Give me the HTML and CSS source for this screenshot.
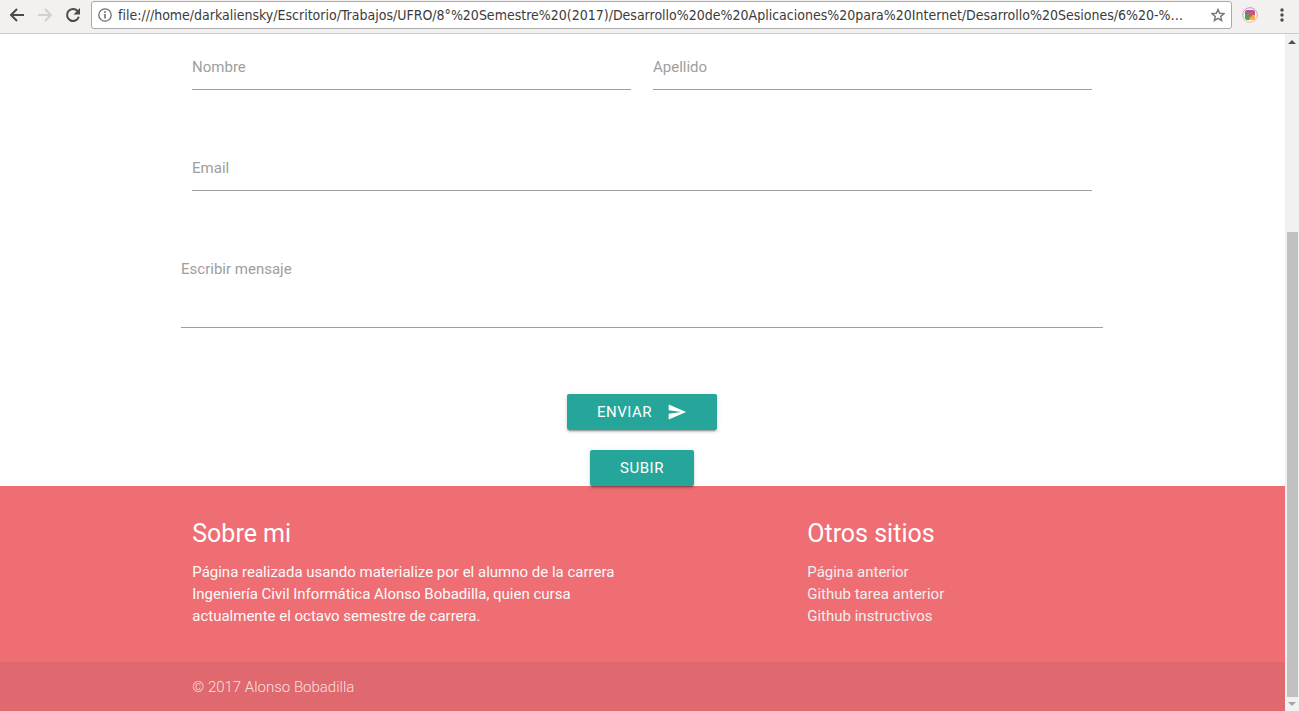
FILE: index.html
```html
<!DOCTYPE html>
<html lang="es">
<head>
<meta charset="utf-8">
<meta name="viewport" content="width=device-width, initial-scale=1">
<title>Contacto</title>
<link rel="stylesheet" href="styles.css">
</head>
<body>
<div class="browser">
  <header class="toolbar">
    <button class="tool" type="button" aria-label="Atrás"><svg viewBox="0 0 16 16" width="16" height="16"><path d="M15 8H2.5M8 2 2 8l6 6" fill="none" stroke="#4b4b4b" stroke-width="2"/></svg></button>
    <button class="tool" type="button" aria-label="Adelante" disabled><svg viewBox="0 0 16 16" width="16" height="16"><path d="M1 8h12.500M8 2l6 6-6 6" fill="none" stroke="#d0d0ce" stroke-width="2"/></svg></button>
    <button class="tool" type="button" aria-label="Recargar"><svg viewBox="0 0 16 16" width="16" height="16"><path d="M12.600 4A6 6 0 1 0 13.800 9.800" fill="none" stroke="#4b4b4b" stroke-width="2"/><path d="M15 1v6.500H8.500z" fill="#4b4b4b"/></svg></button>
    <div class="address">
      <svg viewBox="0 0 14 14" width="14" height="14" aria-hidden="true"><circle cx="7" cy="7" r="6.200" fill="none" stroke="#6e6e6e" stroke-width="1.300"/><path d="M6.200 3.300h1.600v1.600H6.200zM6.200 6h1.600v4.600H6.200z" fill="#6e6e6e"/></svg>
      <input class="url" type="text" aria-label="Dirección" value="file:///home/darkaliensky/Escritorio/Trabajos/UFRO/8°%20Semestre%20(2017)/Desarrollo%20de%20Aplicaciones%20para%20Internet/Desarrollo%20Sesiones/6%20-%…">
      <button class="star" type="button" aria-label="Marcador"><svg viewBox="0 0 14 14" width="14" height="14"><path d="M7 1.400l1.650 3.900 4.250.35-3.220 2.780.97 4.150L7 10.400l-3.650 2.180.97-4.150L1.100 5.650l4.250-.35z" fill="none" stroke="#777" stroke-width="1.400"/></svg></button>
    </div>
    <button class="tool" type="button" aria-label="Extensión"><svg viewBox="0 0 16 16" width="16" height="16"><defs><linearGradient id="ring" x1="0" y1="0" x2="0" y2="1"><stop offset="0" stop-color="#c58ac8"/><stop offset="1" stop-color="#f7b98c"/></linearGradient></defs><circle cx="8" cy="8" r="7.300" fill="#f6f3f2" stroke="url(#ring)"/><rect x="3" y="3" width="10" height="10" rx="3" fill="#e2554f"/><path d="M3 7V6a3 3 0 0 1 3-3h4a3 3 0 0 1 3 3z" fill="#b04fb5"/><path d="M5 5.500h7.500L11 8H8z" fill="#e5484d"/><path d="M3.300 5 8 9l-1 4H6a3 3 0 0 1-3-3z" fill="#43a852"/><path d="M9 8h4v2a3 3 0 0 1-3 3H7z" fill="#f5b03a"/><circle cx="8" cy="8" r="2" fill="#5a8a72" stroke="#e86a4a" stroke-width=".6"/></svg></button>
    <button class="tool" type="button" aria-label="Menú"><svg viewBox="0 0 16 16" width="16" height="16" fill="#4b4b4b"><circle cx="8" cy="3" r="1.700"/><circle cx="8" cy="8" r="1.700"/><circle cx="8" cy="13" r="1.700"/></svg></button>
  </header>
  <div class="viewport">
    <div class="page">
      <main class="content">
        <form class="form">
          <div class="row">
            <div class="col half"><div class="field"><input id="nombre" type="text"><label for="nombre">Nombre</label></div></div>
            <div class="col half"><div class="field"><input id="apellido" type="text"><label for="apellido">Apellido</label></div></div>
          </div>
          <div class="row">
            <div class="col full"><div class="field"><input id="email" type="email"><label for="email">Email</label></div></div>
          </div>
          <div class="row">
            <div class="field full"><textarea id="mensaje"></textarea><label for="mensaje">Escribir mensaje</label></div>
          </div>
        </form>
        <div class="actions">
          <button class="btn" type="submit">ENVIAR<svg viewBox="0 0 24 24" width="20" height="20" fill="#fff" aria-hidden="true"><path d="M2.010 21 23 12 2.010 3 2 10l15 2-15 2z"/></svg></button>
          <a class="btn" href="#">SUBIR</a>
        </div>
      </main>
      <footer class="footer">
        <div class="container">
          <div class="row">
            <section class="col half">
              <h5>Sobre mi</h5>
              <p>Página realizada usando materialize por el alumno de la carrera Ingeniería Civil Informática Alonso Bobadilla, quien cursa actualmente el octavo semestre de carrera.</p>
            </section>
            <section class="col third">
              <h5>Otros sitios</h5>
              <ul>
                <li><a href="#">Página anterior</a></li>
                <li><a href="#">Github tarea anterior</a></li>
                <li><a href="#">Github instructivos</a></li>
              </ul>
            </section>
          </div>
        </div>
        <div class="copyright"><div class="container">© 2017 Alonso Bobadilla</div></div>
      </footer>
    </div>
    <div class="scrollbar" aria-hidden="true">
      <svg viewBox="0 0 14 14" width="14" height="14"><path d="M3 10h8L7 6z" fill="#505050"/></svg>
      <div class="thumb"></div>
      <svg viewBox="0 0 14 14" width="14" height="14"><path d="M3 5h8L7 9z" fill="#a3a3a3"/></svg>
    </div>
  </div>
</div>
</body>
</html>
```
FILE: styles.css
```css
* { box-sizing: border-box; }

body {
  margin: 0;
  font: 15px/22px Roboto, "Liberation Sans", sans-serif;
  color: #fff;
}

h5, p, ul { margin: 0; padding: 0; font-weight: 400; }
ul { list-style: none; }
a { color: inherit; text-decoration: none; }
svg { display: block; flex: none; }
button, input, textarea { font: inherit; border: 0; padding: 0; margin: 0; background: none; }

.browser { display: flex; flex-direction: column; height: 100vh; overflow: hidden; }

.toolbar {
  display: flex;
  flex: none;
  align-items: center;
  gap: 12px;
  height: 34px;
  padding: 0 9px 4px;
  background: #f2f1f0;
  border-bottom: 1px solid #cbcaca;
}
.tool { flex: none; }
.tool:nth-last-child(2) { margin: 0 4px 0 -2px; }

.address {
  display: flex;
  flex: 1;
  align-items: center;
  gap: 6px;
  min-width: 0;
  height: 28px;
  margin: 1px 0 0 -2px;
  padding: 0 6px;
  background: #fff;
  border: 1px solid #aaa;
  border-radius: 3px;
}
.url {
  flex: 1;
  min-width: 0;
  font: 14px/20px "DejaVu Sans Condensed", "Open Sans", sans-serif;
  color: #3b3b3b;
  text-overflow: ellipsis;
}

.viewport { display: flex; flex: 1; min-height: 0; }
.page { flex: 1; min-width: 0; overflow: hidden; background: #fff; }

.content { padding: 10px 1px 0 0; }
.form, .container { width: calc(70% + 1px); margin: 0 auto; }
.form { display: grid; gap: 55px; }
.row { display: flex; margin: 0 -11px; }
.col { padding: 0 11px; }
.half { width: 50%; }
.full { width: 100%; }
.third { width: 33.333%; margin-left: 16.667%; }

.field { display: grid; }
.field > * { grid-area: 1 / 1; }
.field label { align-self: start; justify-self: start; margin-top: 12px; color: #9e9e9e; }
.field input, .field textarea {
  width: 100%;
  height: 46px;
  border-bottom: 1px solid #9e9e9e;
  outline: 0;
}
.field textarea { height: 82px; resize: none; }

.actions {
  display: flex;
  flex-direction: column;
  align-items: center;
  gap: 20px;
  padding-top: 66px;
}
.btn {
  position: relative;
  display: flex;
  align-items: center;
  gap: 15px;
  height: 36px;
  padding: 0 30px;
  border-radius: 2px;
  background: #26a69a;
  color: #fff;
  letter-spacing: 0.5px;
  box-shadow: 0 2px 2px 0 rgba(0, 0, 0, 0.14), 0 1px 5px 0 rgba(0, 0, 0, 0.12), 0 3px 1px -2px rgba(0, 0, 0, 0.2);
}

.footer { background: #ee6e73; }
.footer .row { padding: 32px 0 35px; }
.footer h5 { margin-bottom: 12px; font-size: 25px; line-height: 31px; }
.footer p { color: #fafafa; }
.footer li { color: #eee; }
.copyright {
  padding: 14px 0;
  background: rgba(51, 51, 51, 0.08);
  color: rgba(255, 255, 255, 0.8);
  font-weight: 300;
}

.scrollbar {
  display: grid;
  grid-template-rows: 14px 184fr 465fr 14px;
  width: 14px;
  background: #f1f1f1;
}
.scrollbar svg:last-child { grid-row: 4; }
.thumb { grid-row: 3; margin: 0 1px 0 2px; background: #c1c1c1; }
```
